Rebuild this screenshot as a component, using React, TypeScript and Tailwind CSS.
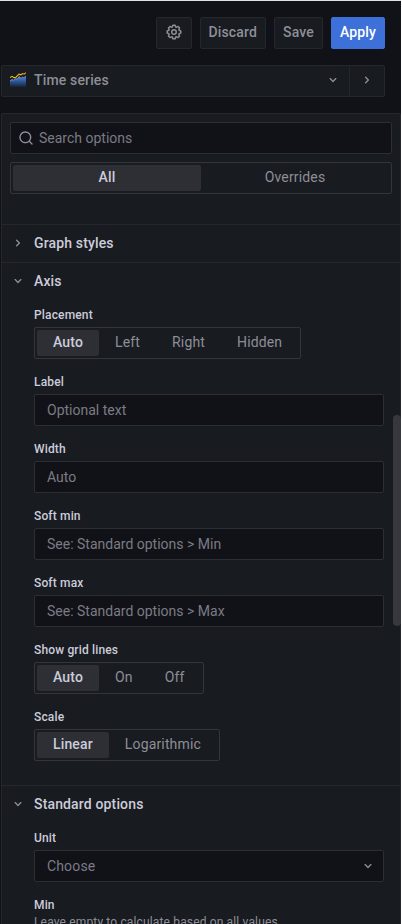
import { useState } from "react";
import type { ReactNode } from "react";

const ICONS = {
  cog: "M21.32,9.55l-1.89-.63.89-1.78A1,1,0,0,0,20.13,6L18,3.87a1,1,0,0,0-1.15-.19l-1.78.89-.63-1.89A1,1,0,0,0,13.5,2h-3a1,1,0,0,0-.95.68L8.92,4.57,7.14,3.68A1,1,0,0,0,6,3.87L3.87,6a1,1,0,0,0-.19,1.15l.89,1.78-1.89.63A1,1,0,0,0,2,10.5v3a1,1,0,0,0,.68.95l1.89.63-.89,1.78A1,1,0,0,0,3.87,18L6,20.13a1,1,0,0,0,1.15.19l1.78-.89.63,1.89a1,1,0,0,0,.95.68h3a1,1,0,0,0,.95-.68l.63-1.89,1.78.89A1,1,0,0,0,18,20.13L20.13,18a1,1,0,0,0,.19-1.15l-.89-1.78,1.89-.63A1,1,0,0,0,22,13.5v-3A1,1,0,0,0,21.32,9.55ZM20,12.78l-1.2.4A2,2,0,0,0,17.64,16l.57,1.14-1.1,1.1L16,17.64a2,2,0,0,0-2.79,1.16l-.4,1.2H11.22l-.4-1.2A2,2,0,0,0,8,17.64l-1.14.57-1.1-1.1L6.36,16A2,2,0,0,0,5.2,13.18L4,12.78V11.22l1.2-.4A2,2,0,0,0,6.36,8L5.79,6.89l1.1-1.1L8,6.36A2,2,0,0,0,10.82,5.2l.4-1.2h1.56l.4,1.2A2,2,0,0,0,16,6.36l1.14-.57,1.1,1.1L17.64,8a2,2,0,0,0,1.16,2.79l1.2.4ZM12,8a4,4,0,1,0,4,4A4,4,0,0,0,12,8Zm0,6a2,2,0,1,1,2-2A2,2,0,0,1,12,14Z",
  angleDown:
    "M17,9.17a1,1,0,0,0-1.41,0L12,12.71,8.46,9.17a1,1,0,0,0-1.41,0,1,1,0,0,0,0,1.42l4.24,4.24a1,1,0,0,0,1.42,0L17,10.59A1,1,0,0,0,17,9.17Z",
  angleRight:
    "M14.83,11.29,10.59,7.05a1,1,0,0,0-1.42,0,1,1,0,0,0,0,1.41L12.71,12,9.17,15.54a1,1,0,0,0,0,1.41,1,1,0,0,0,.71.29,1,1,0,0,0,.71-.29l4.24-4.24A1,1,0,0,0,14.83,11.29Z",
  search:
    "M21.71,20.29,18,16.61A9,9,0,1,0,16.61,18l3.68,3.68a1,1,0,0,0,1.42,0A1,1,0,0,0,21.71,20.29ZM11,18a7,7,0,1,1,7-7A7,7,0,0,1,11,18Z",
};

interface IconProps {
  name: keyof typeof ICONS;
  className?: string;
}

const Icon = ({ name, className = "size-4" }: IconProps) => (
  <svg viewBox="0 0 24 24" fill="currentColor" className={`shrink-0 ${className}`}>
    <path d={ICONS[name]} />
  </svg>
);

const TimeSeriesIcon = () => (
  <svg viewBox="0 0 16 16" className="size-4 shrink-0">
    <defs>
      <linearGradient id="area" x1="0" y1="4" x2="0" y2="15" gradientUnits="userSpaceOnUse">
        <stop offset="0" stopColor="#4f86dc" />
        <stop offset="0.5" stopColor="#2c5796" />
        <stop offset="1" stopColor="#1a2230" />
      </linearGradient>
      <linearGradient id="line" x1="0" y1="0" x2="16" y2="0" gradientUnits="userSpaceOnUse">
        <stop offset="0" stopColor="#f2cc0c" />
        <stop offset="1" stopColor="#ff9830" />
      </linearGradient>
    </defs>
    <path d="M0 9.3 2 7.8 3.5 8.5 5.5 6.7 7 7.6 9.3 4.6 11 6.8 12.5 5.2 13.8 6.2 16 4V15H0Z" fill="url(#area)" />
    <path
      d="M0 9 2 7.5 3.5 8.2 5.5 6.4 7 7.3 9.3 4.5 11 6.5 12.5 4.9 13.8 5.9 16 3.7"
      fill="none"
      stroke="#84aff1"
      strokeWidth="0.8"
    />
    <path
      d="M0 5.6 2 4.4 4 5.6 6 5.2 9 2.2 11 2.8 12.6 1.6 14.2 2.2 16 0.6"
      fill="none"
      stroke="url(#line)"
      strokeWidth="1.1"
    />
  </svg>
);

interface ButtonProps {
  children: ReactNode;
  primary?: boolean;
}

const ToolbarButton = ({ children, primary }: ButtonProps) => (
  <button
    className={`flex h-8 items-center rounded-xs border px-2 pb-0.5 text-sm font-medium tracking-[0.15px] ${
      primary
        ? "border-[#3d71d9] bg-[#3d71d9] text-white"
        : "border-[#25272c] bg-[#181b1f] text-[#8e8e99]"
    }`}
  >
    {children}
  </button>
);

interface RadioProps {
  options: string[];
  full?: boolean;
}

const RadioGroup = ({ options, full }: RadioProps) => {
  const [selected, setSelected] = useState(options[0]);

  return (
    <div
      className={`h-8 rounded-xs border border-[#33353a] p-0.5 ${
        full ? "flex w-full" : "inline-flex"
      }`}
    >
      {options.map((option) => (
        <button
          key={option}
          onClick={() => setSelected(option)}
          className={`h-[26px] rounded-xs px-4 pb-0.5 text-sm leading-6 tracking-[0.15px] whitespace-nowrap ${
            full ? "flex-1" : ""
          } ${
            selected === option
              ? "bg-[#2d2f34] font-medium text-[#ccccdc]"
              : "text-[#8e8e99]"
          }`}
        >
          {option}
        </button>
      ))}
    </div>
  );
};

interface FieldProps {
  label: string;
  children: ReactNode;
}

const Field = ({ label, children }: FieldProps) => (
  <div className="mb-4 flex flex-col items-start">
    <div className="mb-1 h-[15px] text-xs leading-[15px] font-medium tracking-[0.15px]">
      {label}
    </div>
    {children}
  </div>
);

const TextInput = ({ placeholder }: { placeholder: string }) => (
  <input
    placeholder={placeholder}
    className="h-8 w-full rounded-xs border border-[#2c2e33] bg-[#111217] px-3 text-sm placeholder:text-[#7b7b86] focus:outline-none"
  />
);

interface SectionProps {
  title: string;
  open?: boolean;
  children?: ReactNode;
}

const Section = ({ title, open, children }: SectionProps) => (
  <section className="border-t border-[#25272c]">
    <h2 className="flex h-[37px] items-center pb-0.5 pl-2 text-sm font-medium tracking-[0.15px]">
      <Icon name={open ? "angleDown" : "angleRight"} className="mr-2 size-4 text-[#8e8e99]" />
      {title}
    </h2>
    {open && <div className="pt-2 pr-4 pb-2 pl-8">{children}</div>}
  </section>
);

export default function App() {
  return (
    <div className="relative flex h-[924px] w-[401px] flex-col overflow-hidden border-t border-[#dde3e1] bg-[#111217] font-[Roboto,sans-serif] text-sm text-[#ccccdc]">
      {/* Toolbar */}
      <div className="mt-4 mr-4 flex justify-end gap-2">
        <ToolbarButton>
          <Icon name="cog" className="size-[18px]" />
        </ToolbarButton>
        <ToolbarButton>Discard</ToolbarButton>
        <ToolbarButton>Save</ToolbarButton>
        <ToolbarButton primary>Apply</ToolbarButton>
      </div>

      {/* Visualization picker */}
      <div className="mt-4 mr-4 ml-px flex h-8 shrink-0 rounded-xs border border-[#25272c] bg-[#181b1f] text-[#8e8e99]">
        <button className="flex flex-1 items-center px-2 pb-0.5">
          <TimeSeriesIcon />
          <span className="ml-2 flex-1 text-left font-medium tracking-[0.15px]">Time series</span>
          <Icon name="angleDown" />
        </button>
        <button className="flex w-[35px] items-center justify-center border-l border-[#25272c] pb-0.5">
          <Icon name="angleRight" />
        </button>
      </div>

      {/* Options pane */}
      <div className="mt-4 ml-px h-[811px] shrink-0 rounded-t-xs border border-b-0 border-[#25272c] bg-[#181b1f]">
        <div className="flex h-[110px] flex-col gap-2 p-2">
          <div className="flex h-8 shrink-0 items-center rounded-xs border border-[#2c2e33] bg-[#111217] px-[7px]">
            <Icon name="search" className="size-4 text-[#8e8e99]" />
            <input
              placeholder="Search options"
              className="ml-[5px] flex-1 text-sm placeholder:text-[#7b7b86] focus:outline-none"
            />
          </div>
          <RadioGroup options={["All", "Overrides"]} full />
        </div>

        <Section title="Graph styles" />

        <Section title="Axis" open>
          <Field label="Placement">
            <RadioGroup options={["Auto", "Left", "Right", "Hidden"]} />
          </Field>
          <Field label="Label">
            <TextInput placeholder="Optional text" />
          </Field>
          <Field label="Width">
            <TextInput placeholder="Auto" />
          </Field>
          <Field label="Soft min">
            <TextInput placeholder="See: Standard options > Min" />
          </Field>
          <Field label="Soft max">
            <TextInput placeholder="See: Standard options > Max" />
          </Field>
          <Field label="Show grid lines">
            <RadioGroup options={["Auto", "On", "Off"]} />
          </Field>
          <Field label="Scale">
            <RadioGroup options={["Linear", "Logarithmic"]} />
          </Field>
        </Section>

        <Section title="Standard options" open>
          <Field label="Unit">
            <button className="flex h-8 w-full items-center justify-between rounded-xs border border-[#2c2e33] bg-[#111217] pr-[7px] pl-3 tracking-[0.15px] text-[#7b7b86]">
              Choose
              <Icon name="angleDown" className="size-4 text-[#8e8e99]" />
            </button>
          </Field>
          <Field label="Min">
            <p className="-mt-0.5 text-xs leading-[15px] tracking-[0.15px] text-[#8e8e99]">
              Leave empty to calculate based on all values
            </p>
          </Field>
        </Section>
      </div>

      {/* Scrollbar thumb */}
      <div className="absolute top-[414px] right-0 h-[211px] w-2 rounded-full bg-[#36383d]" />
    </div>
  );
}
